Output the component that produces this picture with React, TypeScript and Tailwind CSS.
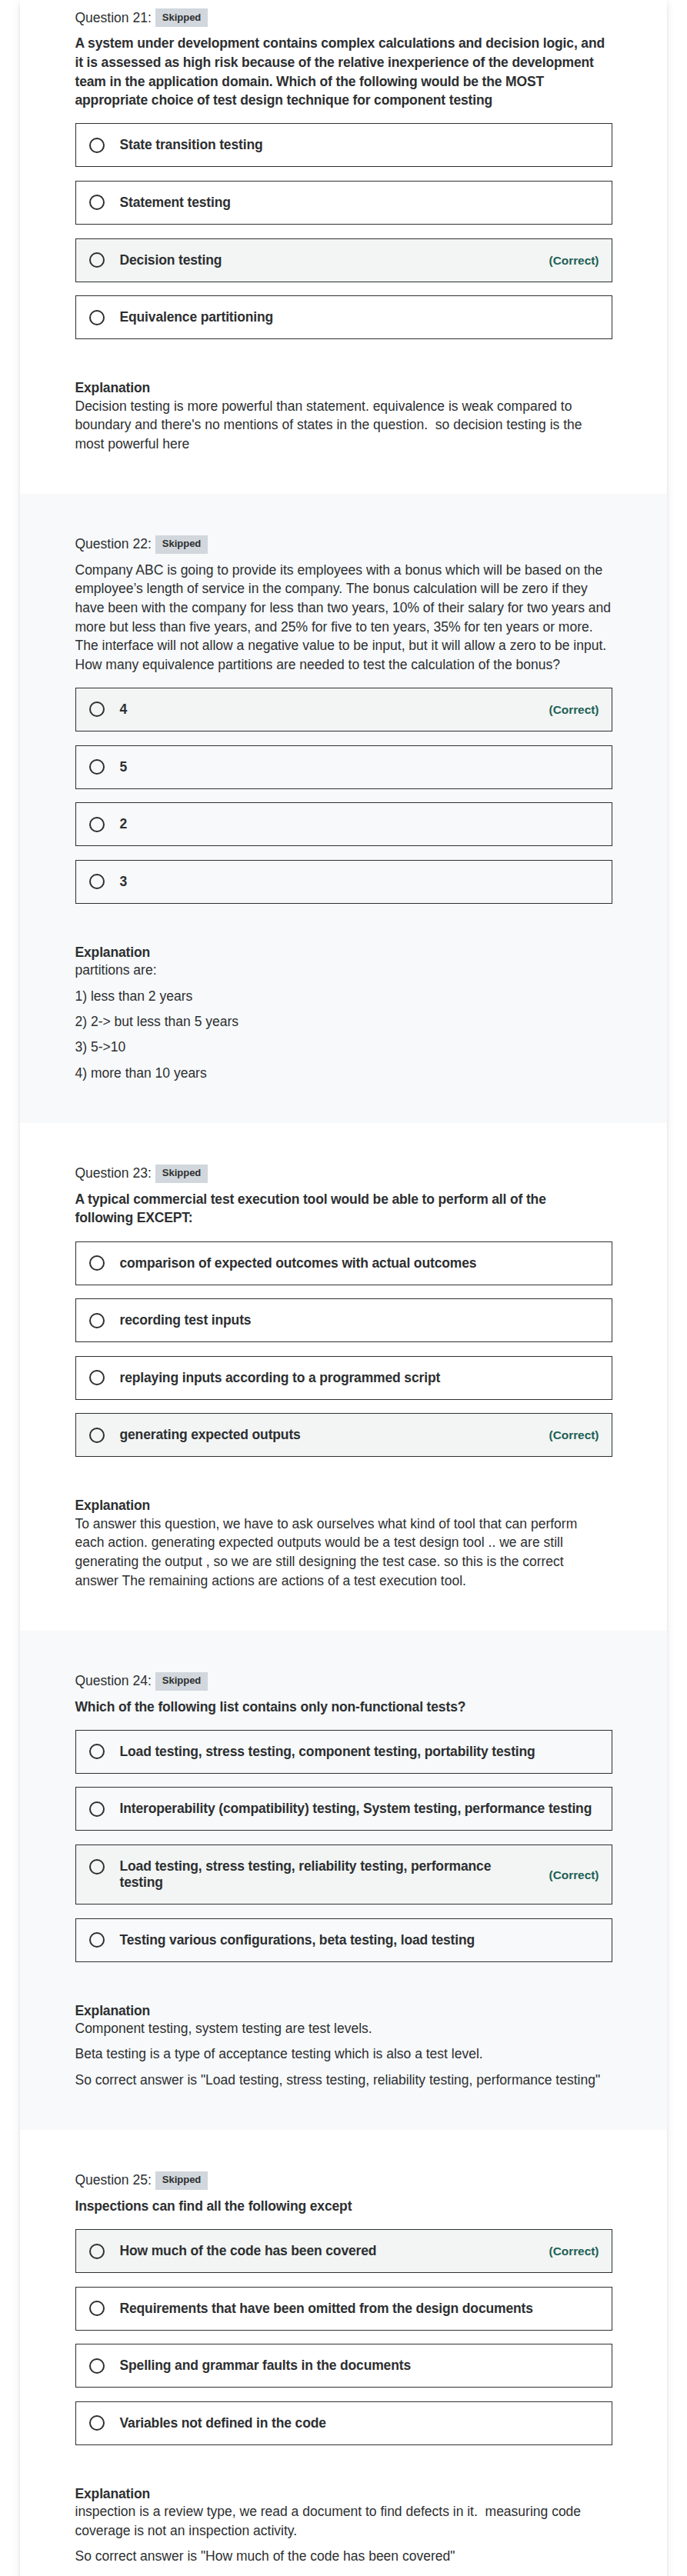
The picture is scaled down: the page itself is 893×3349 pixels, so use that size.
import React from "react";

type Opt = { t: string; correct?: boolean };
type Q = {
  n: number;
  gray: boolean;
  bold: boolean;
  lines: string[];
  options: Opt[];
  expl: string[][];
};

const QS: Q[] = [
  {
    n: 21,
    gray: false,
    bold: true,
    lines: [
      "A system under development contains complex calculations and decision logic, and",
      "it is assessed as high risk because of the relative inexperience of the development",
      "team in the application domain. Which of the following would be the MOST",
      "appropriate choice of test design technique for component testing",
    ],
    options: [
      { t: "State transition testing" },
      { t: "Statement testing" },
      { t: "Decision testing", correct: true },
      { t: "Equivalence partitioning" },
    ],
    expl: [
      [
        "Decision testing is more powerful than statement. equivalence is weak compared to",
        "boundary and there's no mentions of states in the question.\u00a0 so decision testing is the",
        "most powerful here",
      ],
    ],
  },
  {
    n: 22,
    gray: true,
    bold: false,
    lines: [
      "Company ABC is going to provide its employees with a bonus which will be based on the",
      "employee\u2019s length of service in the company. The bonus calculation will be zero if they",
      "have been with the company for less than two years, 10% of their salary for two years and",
      "more but less than five years, and 25% for five to ten years, 35% for ten years or more.",
      "The interface will not allow a negative value to be input, but it will allow a zero to be input.",
      "How many equivalence partitions are needed to test the calculation of the bonus?",
    ],
    options: [{ t: "4", correct: true }, { t: "5" }, { t: "2" }, { t: "3" }],
    expl: [
      ["partitions are:"],
      ["1) less than 2 years"],
      ["2) 2-> but less than 5 years"],
      ["3) 5->10"],
      ["4) more than 10 years"],
    ],
  },
  {
    n: 23,
    gray: false,
    bold: true,
    lines: [
      "A typical commercial test execution tool would be able to perform all of the",
      "following EXCEPT:",
    ],
    options: [
      { t: "comparison of expected outcomes with actual outcomes" },
      { t: "recording test inputs" },
      { t: "replaying inputs according to a programmed script" },
      { t: "generating expected outputs", correct: true },
    ],
    expl: [
      [
        "To answer this question, we have to ask ourselves what kind of tool that can perform",
        "each action. generating expected outputs would be a test design tool .. we are still",
        "generating the output , so we are still designing the test case. so this is the correct",
        "answer The remaining actions are actions of a test execution tool.",
      ],
    ],
  },
  {
    n: 24,
    gray: true,
    bold: true,
    lines: ["Which of the following list contains only non-functional tests?"],
    options: [
      { t: "Load testing, stress testing, component testing, portability testing" },
      { t: "Interoperability (compatibility) testing, System testing, performance testing" },
      { t: "Load testing, stress testing, reliability testing, performance testing", correct: true },
      { t: "Testing various configurations, beta testing, load testing" },
    ],
    expl: [
      ["Component testing, system testing are test levels."],
      ["Beta testing is a type of acceptance testing which is also a test level."],
      ['So correct answer is "Load testing, stress testing, reliability testing, performance testing"'],
    ],
  },
  {
    n: 25,
    gray: false,
    bold: true,
    lines: ["Inspections can find all the following except"],
    options: [
      { t: "How much of the code has been covered", correct: true },
      { t: "Requirements that have been omitted from the design documents" },
      { t: "Spelling and grammar faults in the documents" },
      { t: "Variables not defined in the code" },
    ],
    expl: [
      [
        "inspection is a review type, we read a document to find defects in it.\u00a0 measuring code",
        "coverage is not an inspection activity.",
      ],
      ['So correct answer is "How much of the code has been covered"'],
    ],
  },
];

function Lines({ lines }: { lines: string[] }) {
  return (
    <>
      {lines.map((l, i) => (
        <React.Fragment key={i}>
          {i > 0 && <br />}
          {l}
        </React.Fragment>
      ))}
    </>
  );
}

function Option({ o }: { o: Opt }) {
  return (
    <div
      className={
        "flex items-center border border-[#2d2f31] pl-[17px] pr-[16px] py-[17px] " +
        (o.correct ? "bg-[#f2f5f4]" : "")
      }
    >
      <div className="flex flex-1 items-start">
        <div className="mt-[0.5px] mr-[20px] h-[20px] w-[20px] shrink-0 rounded-full border-2 border-[#2d2f31]" />
        <div className="flex-1 text-[17.5px] font-bold leading-[21px] tracking-[-0.15px] text-[#2d2f31]">
          {o.t}
        </div>
      </div>
      {o.correct && (
        <div className="shrink-0 pl-[16px] text-[15.4px] font-bold leading-[21px] text-[#1e6055]">
          (Correct)
        </div>
      )}
    </div>
  );
}

function Question({ q, first }: { q: Q; first: boolean }) {
  return (
    <section
      className={
        (q.gray ? "bg-[#f7f9fa] " : "bg-white ") +
        (first ? "pt-[11px] " : "pt-[53px] ") +
        "pb-[53px]"
      }
    >
      <div className="mx-auto w-[698px]">
        <div className="flex items-center text-[17.5px] leading-[24.6px] text-[#2d2f31]">
          <span>Question {q.n}:</span>
          <span className="ml-[5px] inline-flex h-[24px] items-center bg-[#d1d7dc] px-[9px] text-[13px] font-bold text-[#2d2f31]">
            Skipped
          </span>
        </div>
        <div
          className={
            "mt-[8.8px] text-[17.5px] leading-[24.6px] text-[#2d2f31] " +
            (q.bold ? "font-bold tracking-[-0.15px]" : "")
          }
        >
          <Lines lines={q.lines} />
        </div>
        <div className="mt-[17.6px] flex flex-col gap-[17.6px]">
          {q.options.map((o, i) => (
            <Option key={i} o={o} />
          ))}
        </div>
        <div className="mt-[53px]">
          <div className="text-[17.5px] font-bold leading-[21.5px] tracking-[-0.15px] text-[#2d2f31]">
            Explanation
          </div>
          <div className="flex flex-col gap-[8.8px]">
            {q.expl.map((p, i) => (
              <p key={i} className="text-[17.5px] leading-[24.6px] text-[#2d2f31]">
                <Lines lines={p} />
              </p>
            ))}
          </div>
        </div>
      </div>
    </section>
  );
}

export default function App() {
  return (
    <div className="min-h-screen bg-white font-['Liberation_Sans',Arial,sans-serif]">
      <div className="mx-[26px] bg-white shadow-[0_2px_4px_rgba(0,0,0,0.08),0_4px_12px_rgba(0,0,0,0.08)]">
        {QS.map((q, i) => (
          <Question key={q.n} q={q} first={i === 0} />
        ))}
      </div>
    </div>
  );
}
